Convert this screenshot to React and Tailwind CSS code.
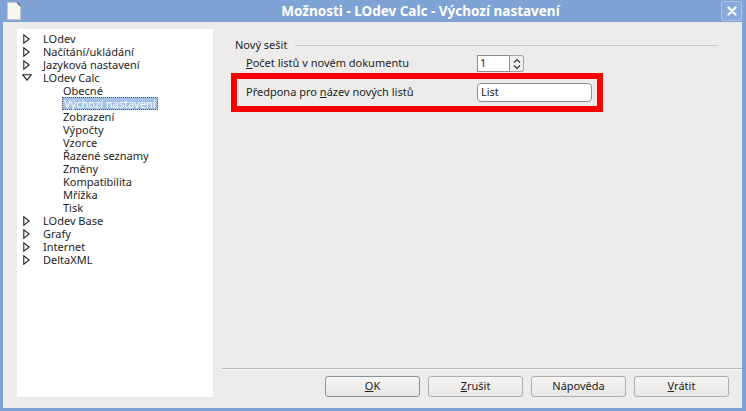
import React from "react";

const TREE = [
  { label: "LOdev", level: 0, arrow: "right" },
  { label: "Načítání/ukládání", level: 0, arrow: "right" },
  { label: "Jazyková nastavení", level: 0, arrow: "right" },
  { label: "LOdev Calc", level: 0, arrow: "down" },
  { label: "Obecné", level: 1 },
  { label: "Výchozí nastavení", level: 1, selected: true },
  { label: "Zobrazení", level: 1 },
  { label: "Výpočty", level: 1 },
  { label: "Vzorce", level: 1 },
  { label: "Řazené seznamy", level: 1 },
  { label: "Změny", level: 1 },
  { label: "Kompatibilita", level: 1 },
  { label: "Mřížka", level: 1 },
  { label: "Tisk", level: 1 },
  { label: "LOdev Base", level: 0, arrow: "right" },
  { label: "Grafy", level: 0, arrow: "right" },
  { label: "Internet", level: 0, arrow: "right" },
  { label: "DeltaXML", level: 0, arrow: "right" },
];

const Arrow = ({ dir }) =>
  dir === "down" ? (
    <svg width="10" height="7" viewBox="0 0 10 7" className="block">
      <path d="M0.8 0.8 H9.2 L5 6.2 Z" fill="none" stroke="#222" strokeWidth="1.1" />
    </svg>
  ) : (
    <svg width="7" height="10" viewBox="0 0 7 10" className="block">
      <path d="M0.8 0.8 V9.2 L6.2 5 Z" fill="none" stroke="#222" strokeWidth="1.1" />
    </svg>
  );

const TreeRow = ({ item }) => (
  <div className="flex h-[13px] items-center leading-[13px]">
    {item.level === 0 ? (
      <>
        <div className={`flex w-[26px] ${item.arrow === "down" ? "pl-[5px]" : "pl-[6px]"}`}>
          {item.arrow && <Arrow dir={item.arrow} />}
        </div>
        <span>{item.label}</span>
      </>
    ) : (
      <span
        className={
          item.selected
            ? "ml-[45px] border border-dotted border-[#555] bg-[#a5c0e5] px-px leading-[11px] text-white"
            : "ml-[46px]"
        }
      >
        {item.label}
      </span>
    )}
  </div>
);

const Button = ({ children, isDefault }) => (
  <button
    className={`h-[21px] w-[95px] rounded-[3px] border bg-gradient-to-b from-[#f6f5f4] to-[#e8e7e5] text-[11px] text-[#222] ${
      isDefault ? "border-[#8a929c]" : "border-[#aeadab]"
    }`}
  >
    {children}
  </button>
);

export default function App() {
  return (
    <div
      className="flex h-[411px] w-[746px] flex-col bg-[#7fa3d5] pb-[3px] pl-[3px] pr-[4px] text-[11px] text-[#1e1e1e]"
      style={{ fontFamily: '"Noto Sans", "Open Sans", sans-serif' }}
    >
      {/* Title bar */}
      <div className="relative flex h-[22px] shrink-0 items-center justify-center">
        <svg width="14" height="18" viewBox="0 0 14 18" className="absolute left-[4px] top-[2px]">
          <path d="M0.5 0.5 H10 L13.5 4 V17.5 H0.5 Z" fill="#f7f6f2" stroke="#c8c6c0" />
          <path d="M10 0.5 L13.5 4" stroke="#666" strokeWidth="1.2" />
        </svg>
        <span className="pl-[96px] text-[13.5px] font-bold text-white">
          Možnosti - LOdev Calc - Výchozí nastavení
        </span>
        <div className="absolute right-[0px] top-[1px] flex h-[20px] w-[21px] items-center justify-center rounded-[2px] border border-[#a9c2e4] bg-[#88aadb]">
          <svg width="10" height="10" viewBox="0 0 10 10">
            <path d="M1.5 1.5 L8.5 8.5 M8.5 1.5 L1.5 8.5" stroke="#fff" strokeWidth="2.2" strokeLinecap="round" />
          </svg>
        </div>
      </div>

      {/* Body */}
      <div className="flex flex-1 bg-[#edecea]">
        {/* Tree */}
        <div className="mb-[11px] ml-[14px] mt-[7px] w-[196px] bg-white pt-[3px]">
          {TREE.map((item) => (
            <TreeRow key={item.label} item={item} />
          ))}
        </div>

        {/* Right column */}
        <div className="flex flex-1 flex-col">
          <div className="flex-1 pl-[18px] pr-[24px] pt-[16px]">
            <div className="flex h-[14px] items-center pl-[4px]">
              <span>Nový sešit</span>
              <div className="ml-[8px] h-px flex-1 bg-[#c9c7c4]" />
            </div>

            <div className="mt-[3px] flex h-[17px] items-center pl-[15px]">
              <span className="w-[231px]">
                <u>P</u>očet listů v novém dokumentu
              </span>
              <div className="flex h-[17px] w-[33px] items-center border border-[#8f8e8c] bg-white pl-[2px]">
                1
              </div>
              <div className="flex h-[17px] w-[14px] flex-col items-center justify-center rounded-r-[3px] border border-l-0 border-[#a3a2a0] bg-[#f2f1f0]">
                <svg width="8" height="12" viewBox="0 0 8 12">
                  <path d="M1 4.5 L4 1.5 L7 4.5 M1 7.5 L4 10.5 L7 7.5" fill="none" stroke="#333" strokeWidth="1.2" />
                </svg>
              </div>
            </div>

            <div className="mr-[115px] mt-[1px] h-[39px] border-[6px] border-[#f70000]">
              <div className="flex h-[27px] items-center pl-[9px]">
                <span className="w-[231px]">
                  Předpona pro <u>n</u>ázev nových listů
                </span>
                <div className="flex h-[19px] w-[115px] items-center rounded-[4px] border border-[#8f8e8c] bg-white pl-[3px]">
                  List
                </div>
              </div>
            </div>
          </div>

          <div className="ml-[9px] h-[2px] border-t border-[#b6b4b1] bg-white/70" />

          <div className="flex justify-end gap-[8px] pb-[11px] pr-[13px] pt-[6px]">
            <Button isDefault>
              <u>O</u>K
            </Button>
            <Button>
              <u>Z</u>rušit
            </Button>
            <Button>Nápověda</Button>
            <Button>
              <u>V</u>rátit
            </Button>
          </div>
        </div>
      </div>
    </div>
  );
}
